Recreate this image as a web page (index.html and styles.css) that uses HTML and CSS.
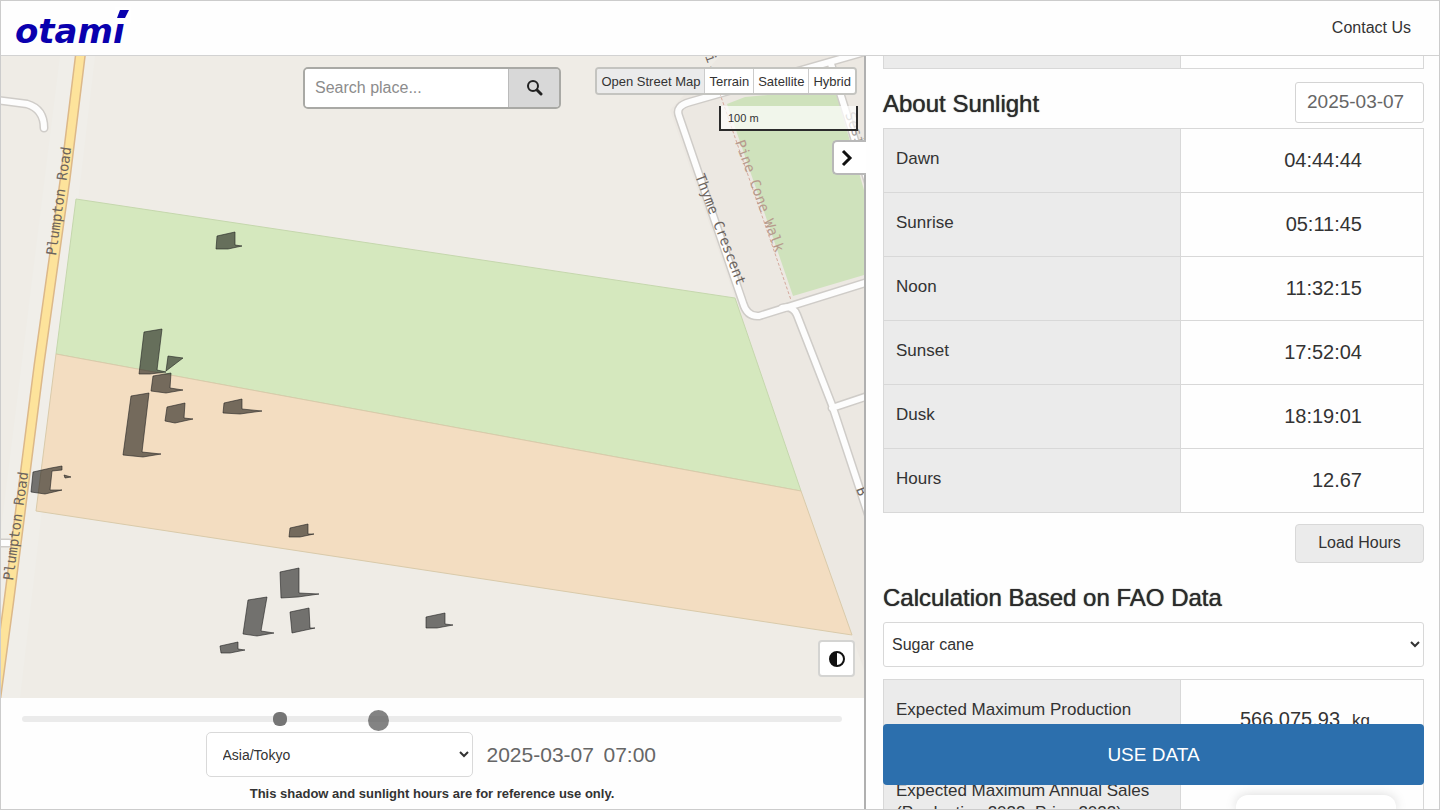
FILE: index.html
```html
<!DOCTYPE html>
<html lang="en">
<head>
<meta charset="utf-8">
<title>otami</title>
<link rel="stylesheet" href="styles.css">
</head>
<body>
<header class="topbar">
  <a class="logo" href="#" aria-label="otami home">
    <svg width="124" height="50" viewBox="0 0 124 50">
      <text class="logo-word" x="1" y="40">otami</text>
      <path d="M101 4h16v16H99z" fill="#fff"/>
      <path d="M106 7h9l-4 8h-8z" fill="#0a00ae"/>
    </svg>
  </a>
  <a class="contact" href="#">Contact Us</a>
</header>
<main class="workspace">
  <section class="map-column">
    <div class="map">
      <svg class="map-canvas" viewBox="0 56 864 642" preserveAspectRatio="xMidYMid slice" aria-hidden="true">
        <rect x="0" y="56" width="864" height="642" fill="#efece6"/>
        <path d="M720 56H864V698H874L801 491L735 298L670 110Z" fill="#ece8e2"/>
        <path d="M60 56H95L20 698H-20Z" fill="#f0eee9"/>
        <path d="M727 104L745 97L835 89L864 190V275L793 296Z" fill="#cfe2bc"/>
        <path class="field green" d="M76 199L735 298L801 491L56 354Z"/>
        <path class="field orange" d="M56 354L801 491L852 635L36 511Z"/>
        <g class="road-case">
          <path d="M-4 100L27 104Q44 109 44 128"/>
          <path d="M868 51L690 102Q675 106 679 116L743 303Q747 317 759 316L868 282"/>
          <path d="M831 64L868 182"/>
          <path d="M782 308Q793 305 797 315L832 405L870 520M832 408L868 396"/>
          <path d="M-4 543H9"/>
        </g>
        <g class="road-fill">
          <path d="M-4 100L27 104Q44 109 44 128"/>
          <path d="M868 51L690 102Q675 106 679 116L743 303Q747 317 759 316L868 282"/>
          <path d="M831 64L868 182"/>
          <path d="M782 308Q793 305 797 315L832 405L870 520M832 408L868 396"/>
          <path d="M-4 543H9"/>
        </g>
        <path class="main-case" d="M81 50L65 180L39 365L9 600L-5 704"/>
        <path class="main-fill" d="M81 50L65 180L39 365L9 600L-5 704"/>
        <path class="footpath" d="M718 88L791 300"/>
        <g class="map-label">
          <text transform="translate(56 256) rotate(-82)">Plumpton Road</text>
          <text transform="translate(13 581) rotate(-82)">Plumpton Road</text>
          <text transform="translate(695 176) rotate(69)">Thyme Crescent</text>
          <text transform="translate(845 114) rotate(70)" opacity=".6">Sesi</text>
          <text transform="translate(705 56) rotate(70)">i.</text>
          <text transform="translate(856 489) rotate(70)">B</text>
          <text class="path-label" transform="translate(735 142) rotate(70)">Pine Cone Walk</text>
        </g>
        <g class="shadow">
          <path d="M217 236L235 232V245L242 246L228 249L216 249Z"/>
          <path d="M144 332L162 329L157 370L166 372L150 374L139 374Z"/>
          <path d="M168 356L183 358L166 371Z"/>
          <path d="M153 376L171 373L170 388L183 390L166 393L151 391Z"/>
          <path d="M131 396L149 393L142 452L161 454L143 457L123 455Z"/>
          <path d="M167 407L185 403L184 418L193 419L175 423L165 421Z"/>
          <path d="M224 403L242 399V409L262 411L240 414L223 413Z"/>
          <path d="M33 472L51 468L62 466V470L52 471L50 490L62 490L45 494L31 492Z"/>
          <path d="M64 475L71 477L65 478Z"/>
          <path d="M290 528L308 524V534L314 534L300 537L289 537Z"/>
          <path d="M280 572L299 568V593L319 594L298 597L281 598Z"/>
          <path d="M248 600L267 597L261 631L274 633L257 636L243 634Z"/>
          <path d="M290 612L309 608L310 628L315 628L292 633Z"/>
          <path d="M220 646L238 642V649L245 650L230 653L221 653Z"/>
          <path d="M426 617L445 613V624L453 625L437 628L426 628Z"/>
        </g>
      </svg>
      <form class="search">
        <input type="text" placeholder="Search place..." aria-label="Search place">
        <button type="button" aria-label="Search">
          <svg width="18" height="18" viewBox="0 0 18 18" fill="none" stroke="#222" stroke-width="2"><circle cx="8" cy="7" r="5"/><path d="M12 11L16 15" stroke-width="3" stroke-linecap="round"/></svg>
        </button>
      </form>
      <div class="layers">
        <button type="button" class="active">Open Street Map</button>
        <button type="button">Terrain</button>
        <button type="button">Satellite</button>
        <button type="button">Hybrid</button>
      </div>
      <div class="scale">100 m</div>
      <button type="button" class="collapse" aria-label="Collapse panel">
        <svg width="12" height="18" viewBox="0 0 12 18" fill="none" stroke="#111" stroke-width="3"><path d="M2 2L9 9L2 16"/></svg>
      </button>
      <button type="button" class="contrast" aria-label="Contrast">
        <svg width="16" height="16" viewBox="0 0 16 16"><circle cx="8" cy="8" r="7" fill="#fff" stroke="#111" stroke-width="2"/><path d="M8 1A7 7 0 0 0 8 15Z" fill="#111"/></svg>
      </button>
    </div>
    <div class="timeline">
      <div class="slider">
        <input type="range" min="0" max="1440" value="449" aria-label="Time of day">
        <span class="pointer"></span>
      </div>
      <div class="time-row">
        <select class="zone" aria-label="Time zone"><option>Asia/Tokyo</option></select>
        <div class="moment">
          <input class="date" type="text" value="2025-03-07" aria-label="Date">
          <input class="clock" type="text" value="07:00" aria-label="Time">
        </div>
      </div>
      <p class="note">This shadow and sunlight hours are for reference use only.</p>
    </div>
  </section>
  <aside class="panel">
    <div class="panel-scroll">
      <table class="data tail"><tbody><tr><th></th><td></td></tr></tbody></table>
      <div class="heading-row">
        <h2>About Sunlight</h2>
        <input class="sun-date" type="text" value="2025-03-07" aria-label="Sunlight date">
      </div>
      <table class="data">
        <tbody>
          <tr><th scope="row">Dawn</th><td>04:44:44</td></tr>
          <tr><th scope="row">Sunrise</th><td>05:11:45</td></tr>
          <tr><th scope="row">Noon</th><td>11:32:15</td></tr>
          <tr><th scope="row">Sunset</th><td>17:52:04</td></tr>
          <tr><th scope="row">Dusk</th><td>18:19:01</td></tr>
          <tr><th scope="row">Hours</th><td>12.67</td></tr>
        </tbody>
      </table>
      <button type="button" class="load">Load Hours</button>
      <h2 class="calc-title">Calculation Based on FAO Data</h2>
      <select class="crop" aria-label="Crop"><option>Sugar cane</option></select>
      <table class="data results">
        <tbody>
          <tr><th scope="row">Expected Maximum Production</th><td>566,075.93<span class="unit">kg</span></td></tr>
          <tr><th scope="row">Expected Maximum Annual Sales (Production 2022, Price 2022)</th><td></td></tr>
        </tbody>
      </table>
    </div>
    <button type="button" class="use-data">USE DATA</button>
    <div class="popup"></div>
  </aside>
</main>
</body>
</html>
```
FILE: styles.css
```css
* {
  box-sizing: border-box;
}

body {
  margin: 0;
  height: 100vh;
  display: flex;
  flex-direction: column;
  overflow: hidden;
  background: #fefefe;
  color: #333;
  font-family: "Liberation Sans", Arial, sans-serif;
  font-size: 16px;
}

body::after {
  content: "";
  position: fixed;
  inset: 0;
  border: 1px solid #ccc;
  pointer-events: none;
}

button,
input,
select {
  font-family: inherit;
  color: inherit;
}

button {
  padding: 0;
  cursor: pointer;
}

.topbar {
  flex: none;
  height: 56px;
  display: flex;
  align-items: center;
  justify-content: space-between;
  padding: 0 29px 0 14px;
  border-bottom: 1px solid #d2d2d2;
}

.logo svg {
  display: block;
}

.logo-word {
  font: italic bold 34px "DejaVu Sans", sans-serif;
  fill: #0a00ae;
}

.contact {
  color: #333;
  text-decoration: none;
}

.workspace {
  flex: 1;
  min-height: 0;
  display: flex;
}

.map-column {
  box-sizing: content-box;
  width: 60%;
  border-right: 2px solid #b0b0b0;
  display: flex;
  flex-direction: column;
}

.map {
  flex: 1;
  min-height: 0;
  position: relative;
}

.map-canvas {
  display: block;
  width: 100%;
  height: 100%;
}

.field {
  stroke-width: 1;
}

.green {
  fill: #d5e8be;
  stroke: #c5d7ad;
}

.orange {
  fill: #f3ddc1;
  stroke: #d9caaa;
}

.road-case,
.road-fill {
  fill: none;
  stroke: #cfccc8;
  stroke-width: 9;
  stroke-linecap: round;
}

.road-fill {
  stroke: #fdfdfd;
  stroke-width: 6;
}

.main-case {
  fill: none;
  stroke: #dcb889;
  stroke-width: 11;
}

.main-fill {
  fill: none;
  stroke: #fde39b;
  stroke-width: 8;
}

.footpath {
  fill: none;
  stroke: #d5a99d;
  stroke-width: 1;
  stroke-dasharray: 3 2;
}

.map-label {
  font: 14px "DejaVu Sans Mono", monospace;
  fill: #6c645e;
}

.path-label {
  fill: #b79a8c;
}

.shadow {
  fill: #000;
  fill-opacity: 0.52;
  stroke: #222;
  stroke-opacity: 0.6;
  stroke-width: 1;
}

.search {
  position: absolute;
  top: 11px;
  left: 50%;
  width: 258px;
  height: 42px;
  margin-left: -129px;
  display: flex;
  border: 2px solid #a9a9a5;
  border-radius: 5px;
  overflow: hidden;
}

.search input {
  flex: 1;
  min-width: 0;
  padding: 0 10px;
  border: 0;
  background: #fff;
  font-size: 16px;
}

.search input::placeholder {
  color: #8c8c8c;
}

.search button {
  width: 51px;
  border: 0;
  border-left: 1px solid #bbb;
  background: #d8d8d8;
  display: grid;
  place-items: center;
}

.layers {
  position: absolute;
  top: 11px;
  right: 7px;
  height: 28px;
  display: flex;
  border: 2px solid #c4c4c0;
  border-radius: 4px;
  overflow: hidden;
}

.layers button {
  padding: 0 4px;
  border: 0;
  background: #fff;
  font-size: 13px;
}

.layers button + button {
  border-left: 1px solid #ccc;
}

.layers .active {
  background: #ebebeb;
}

.scale {
  position: absolute;
  top: 50px;
  right: 6px;
  width: 139px;
  height: 25px;
  padding-left: 7px;
  border: 2px solid #2b2b2b;
  border-top: 0;
  background: rgba(255, 255, 255, 0.7);
  font-size: 11px;
  line-height: 24px;
}

.collapse {
  position: absolute;
  top: 84px;
  right: -2px;
  width: 34px;
  height: 35px;
  display: grid;
  place-items: center;
  padding-right: 7px;
  border: 2px solid #b8b8b8;
  border-right: 0;
  border-radius: 5px 0 0 5px;
  background: #fff;
}

.contrast {
  position: absolute;
  right: 9px;
  bottom: 21px;
  width: 37px;
  height: 37px;
  display: grid;
  place-items: center;
  border: 2px solid #d4d4d2;
  border-radius: 4px;
  background: #fff;
}

.timeline {
  flex: none;
  height: 112px;
  padding: 14px 22px 0;
}

.slider {
  position: relative;
  height: 14px;
  margin-bottom: 6px;
}

.slider input {
  display: block;
  appearance: none;
  width: 100%;
  height: 14px;
  margin: 0;
  background: transparent;
}

.slider input::-webkit-slider-runnable-track {
  height: 6px;
  border-radius: 3px;
  background: #ebebeb;
}

.slider input::-webkit-slider-thumb {
  appearance: none;
  width: 14px;
  height: 14px;
  margin-top: -4px;
  border-radius: 6px;
  background: #757575;
}

.pointer {
  position: absolute;
  left: 346px;
  top: -2px;
  width: 21px;
  height: 21px;
  border-radius: 50%;
  background: rgba(90, 90, 90, 0.75);
}

.time-row {
  display: flex;
  justify-content: center;
  align-items: center;
  gap: 14px;
}

.zone {
  width: 267px;
  height: 45px;
  padding: 0 0 0 12px;
  border: 1px solid #d9d9d9;
  border-radius: 5px;
  background: #fff;
  font-size: 14px;
}

.moment {
  display: flex;
  gap: 8px;
}

.moment input {
  padding: 0;
  border: 0;
  background: transparent;
  color: #666;
  font-size: 21px;
}

.moment .date {
  width: 109px;
}

.moment .clock {
  width: 55px;
}

.note {
  margin: 8px 0 0;
  text-align: center;
  font-size: 13px;
  font-weight: bold;
  line-height: 18px;
}

.panel {
  flex: 1;
  min-width: 0;
  position: relative;
  overflow: hidden;
}

.panel-scroll {
  height: 100%;
  padding: 0 16px 0 17px;
  overflow: hidden;
}

.data {
  width: 100%;
  table-layout: fixed;
  border-collapse: collapse;
}

.data th,
.data td {
  height: 64px;
  border: 1px solid #d8d8d8;
}

.data th {
  width: 55%;
  padding: 19px 12px 0;
  background: #ebebeb;
  text-align: left;
  vertical-align: top;
  font-size: 17px;
  font-weight: normal;
  line-height: 22px;
}

.data td {
  padding: 0 61px 0 12px;
  text-align: right;
  font-size: 20px;
}

.data.tail th,
.data.tail td {
  height: 12px;
  padding: 0;
  border-top: 0;
}

h2 {
  margin: 0;
  font-size: 24px;
  font-weight: normal;
  line-height: 30px;
  color: #2b2b2b;
  text-shadow: 0 0 1px currentColor;
}

.heading-row {
  display: flex;
  justify-content: space-between;
  align-items: flex-end;
  padding: 13px 0 5px;
}

.heading-row h2 {
  padding-bottom: 4px;
}

.sun-date {
  width: 129px;
  height: 41px;
  padding: 0 11px;
  border: 1px solid #d4d4d4;
  border-radius: 3px;
  background: #fff;
  color: #666;
  font-size: 19px;
}

.load {
  display: block;
  width: 129px;
  height: 39px;
  margin: 11px 0 0 auto;
  border: 1px solid #d8d8d8;
  border-radius: 4px;
  background: #ebebeb;
  font-size: 16px;
}

.calc-title {
  margin-top: 20px;
}

.crop {
  display: block;
  width: 100%;
  height: 45px;
  margin: 9px 0 12px;
  padding: 0 0 0 4px;
  border: 1px solid #d8d8d8;
  border-radius: 3px;
  background: #fff;
  font-size: 16px;
}

.data.results th,
.data.results td {
  height: 81px;
}

.data.results td {
  padding-right: 53px;
}

.unit {
  margin-left: 12px;
  font-size: 17px;
}

.use-data {
  position: absolute;
  left: 17px;
  right: 16px;
  bottom: 25px;
  height: 61px;
  border: 0;
  border-radius: 4px;
  background: #2c6fad;
  color: #fff;
  font-size: 19px;
}

.popup {
  position: absolute;
  right: 44px;
  bottom: 0;
  width: 160px;
  height: 15px;
  border-radius: 12px 12px 0 0;
  background: #fff;
  box-shadow: 0 0 12px rgba(0, 0, 0, 0.15);
}
```
